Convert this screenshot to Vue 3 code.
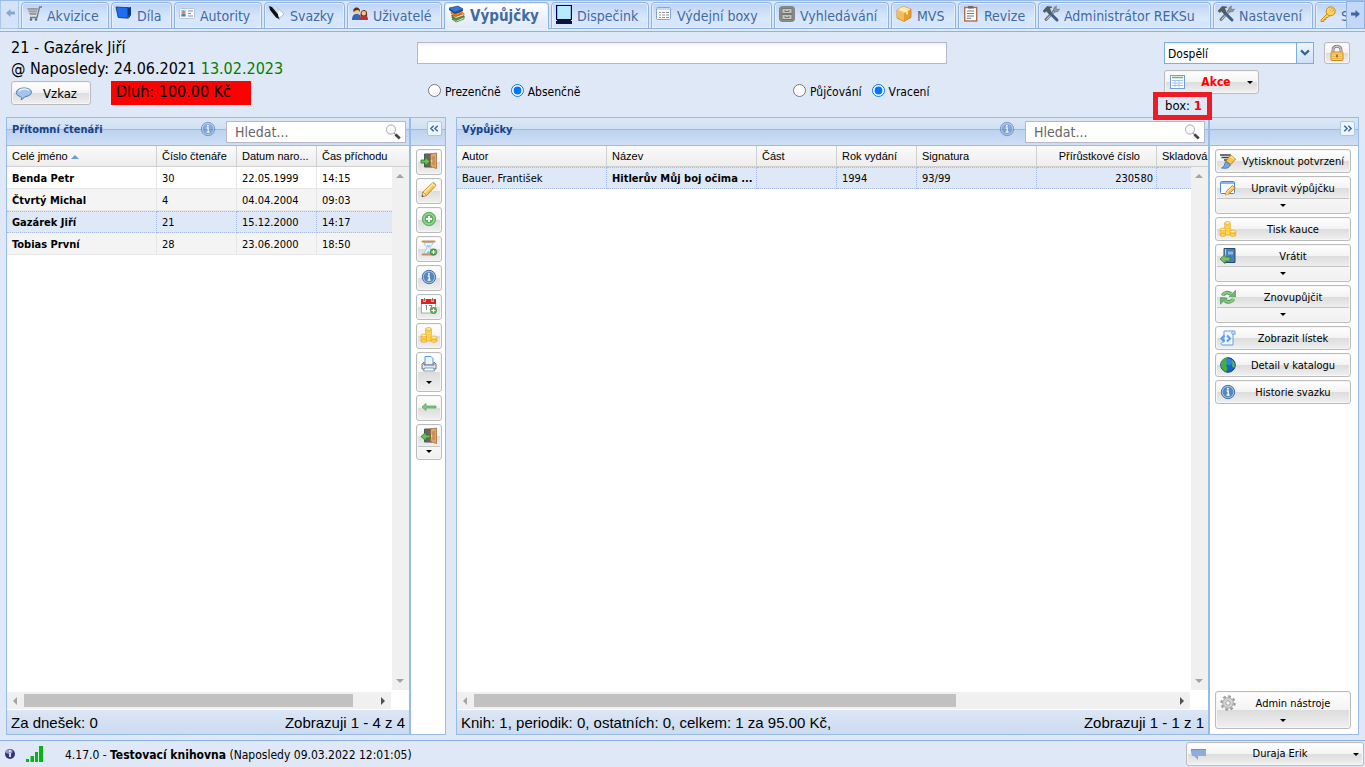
<script setup>
import { ref } from 'vue'

const icons = {
  cart: '<path d="M1 2h11l-2 7H4z" fill="#9a9a9a"/><path d="M2 4.2h9M3 6.4h8" stroke="#d9e5f8" stroke-width=".5"/><path d="M4 11.5h7L13.6 1H16" fill="none" stroke="#777" stroke-width="1.3"/><circle cx="5" cy="13.5" r="1.3" fill="#666"/><circle cx="10" cy="13.5" r="1.3" fill="#666"/>',
  blueBook: '<path d="M11 1.500l4-.5v8l-2.500 4z" fill="#0b3b8c"/><path d="M0 1l12 .7-.3 10.500-9.500-.7z" fill="#1f6ef2" stroke="#0a2d80" stroke-width=".8"/>',
  card: '<rect x=".5" y="2.500" width="15" height="10" rx="1" fill="#f7f9fc" stroke="#b8c6da"/><rect x="2" y="4" width="5" height="6" fill="#a9d3f5"/><circle cx="4.500" cy="6" r="1.500" fill="#c98a4b"/><path d="M2.300 10.500c0-4 4.400-4 4.400 0z" fill="#4f7fc0"/><path d="M9 5h5M9 7.500h3M9 10h5" stroke="#7f91a8"/>',
  pen: '<path d="M0 0l3 1 7 8.500 1 4-4-2L1 4z" fill="#111"/><path d="M8 1.500l7 6.500-5 5" fill="none" stroke="#b8bcc4" stroke-width="1"/><path d="M10 4l4 4-4 4-1-3z" fill="#fff"/>',
  users: '<path d="M0 14c0-5 2-6 5-6s4 2 4 6z" fill="#3567b5"/><circle cx="4.800" cy="5.300" r="2.800" fill="#f3c394"/><path d="M1.500 6C0 0 9 0 8 6 7 3 4 3.500 1.500 6z" fill="#5a3217"/><path d="M8 14c0-4 1-5 4-5s4 2 4 5z" fill="#b33633"/><path d="M8.500 10c-1-8 8-8 6.500 0z" fill="#6b3917"/><circle cx="11.800" cy="7.200" r="2.200" fill="#f3c394"/>',
  books: '<path d="M3 9l9-1.500 3.500 3L7 14 3 12z" fill="#37a02c" stroke="#17601a" stroke-width=".5"/><path d="M7 14.500l8-3.500v2l-8 3-4-3z" fill="#eee" stroke="#237226" stroke-width=".7"/><path d="M1.500 5.500L11 4l4 3-8 3-5-2z" fill="#ea7a20"/><path d="M7 10.500l8-3v2l-8 2.800-4.500-3z" fill="#f7eee5" stroke="#b4520d" stroke-width=".7"/><path d="M0 2l9-2 5 3-8 3.500z" fill="#2d77d8" stroke="#123d7c" stroke-width=".6"/><path d="M0 2v2l6 4 8-3V3L6 6.500z" fill="#174892"/>',
  monitor: '<path d="M0-1h16v15H0z" fill="#000066"/><path d="M1.200 0h13.600v13H1.200z" fill="#b5ebff"/><path d="M1 14h14v1H1zM0 15h16v3H0z" fill="#11133c"/>',
  sheet: '<rect x=".5" y="1.500" width="14" height="12" rx="1" fill="#fff" stroke="#7fa7da"/><path d="M1 2h13v2H1z" fill="#c3dbf6"/><path d="M3 6.500h2M6 6.500h3M10 6.500h3M3 9h2M6 9h3M10 9h3M3 11.500h2M6 11.500h3M10 11.500h3" stroke="#8f8f8f" stroke-width="1"/>',
  greenSheet: '<rect x=".5" y="1.500" width="14" height="13" fill="#fff" stroke="#6e9edb"/><path d="M2 3.500h11" stroke="#67b567" stroke-width="1.500"/><path d="M2 6.500h11M2 9h11M2 11.500h11M5 6v7M9 6v7" stroke="#a4c3ea" stroke-width="1"/>',
  cabinet: '<rect x=".7" y=".7" width="14.600" height="14.600" rx="2" fill="#8f918c" stroke="#73756f"/><rect x="3" y="2.500" width="10" height="5" fill="#c4c5be" stroke="#777"/><rect x="3" y="8.500" width="10" height="5" fill="#c4c5be" stroke="#777"/><path d="M6 4v1.500h4V4M6 10v1.500h4V10" fill="none" stroke="#777"/>',
  box: '<path d="M1 4l6-3.500L15 3v8.500L8 15.500 1 12z" fill="#e99d2f" stroke="#c0781d" stroke-width=".7"/><path d="M1 4l7 3 7-4-8-2.500z" fill="#ffe5a0"/><path d="M1 4l7 3v8l-7-3.500z" fill="#f6bd56"/><path d="M4 2.500l7 3v3" fill="none" stroke="#fff2c8" stroke-width="1.500"/>',
  list: '<rect x="1.700" y="1.500" width="12" height="13.500" fill="#fff" stroke="#b06e51" stroke-width="1.400"/><path d="M5 0h5.500v2.500H5z" fill="#7a675b"/><path d="M4 5h7M4 7.500h7M4 10h7M4 12.300h4" stroke="#777" stroke-width="1"/>',
  tools: '<path d="M12.500 3.500L3 13.500" stroke="#70777c" stroke-width="3" stroke-linecap="round"/><path d="M12 4.500L3.500 13.500" stroke="#cfd5d9" stroke-width="1"/><path d="M10.500 4.500L11 1.500 13.500 0 13 2.500 14 3.500 16.500 3 15 5.500l-3 .5z" fill="#939a9f" stroke="#687076" stroke-width=".6"/><path d="M7 7l7 7" stroke="#3f5f86" stroke-width="3" stroke-linecap="round"/><path d="M0 5l4-4.500 5 .5-2.500 1.500L8 5 5.500 7.500 3.500 5 1.800 6.500z" fill="#555c60" stroke="#3c4245" stroke-width=".5"/>',
  key: '<path d="M7.500 7.500L1 14v1.500h3v-2h2v-2h2L10 9.500" fill="#ffd35a" stroke="#c98a1d" stroke-width="1"/><circle cx="10.700" cy="5.300" r="4.500" fill="#ffd35a" stroke="#c98a1d"/><circle cx="12" cy="4" r="1.300" fill="#fff" stroke="#c98a1d" stroke-width=".7"/>',
  bubble: '<path d="M3 11c-5-2-3-8 5-8 9 0 10 7 2 8.500-2 0-2 2.500-5 3 1-1.500.5-2.500-2-3.500z" fill="#a3c4ec" stroke="#3f6ca8" stroke-width=".9"/><path d="M3 6c2-2.500 8-2.500 10-.5" fill="none" stroke="#e9f3ff" stroke-width="1.500"/>',
  lock: '<path d="M4 8V5c0-5 8-5 8 0v3" fill="none" stroke="#888" stroke-width="3"/><path d="M4 8V5c0-5 8-5 8 0v3" fill="none" stroke="#ddd" stroke-width="1"/><rect x="2" y="7" width="12" height="8.500" rx="1" fill="#ffd46b" stroke="#c68c27"/><path d="M3 9h10M3 11.300h10M3 13.500h10" stroke="#e5a93b" stroke-width=".8"/><path d="M7.300 9.500h1.400v3H7.300z" fill="#805511"/>',
  doorIn: '<path d="M3.500 1H11v13H3.500z" fill="#666" stroke="#555"/><path d="M9.500 1L15.500 0v15.500l-6-2z" fill="#e0a76c" stroke="#98612b" stroke-width=".7"/><path d="M11 3.500l3-.5v9.500l-3-1z" fill="#cd9054"/><circle cx="10.700" cy="8" r=".8" fill="#fff1ad"/><path d="M0 7h4V4l5 4.500L4 13v-3H0z" fill="#6abc5e" stroke="#2b762a" stroke-width=".8"/>',
  doorOut: '<path d="M3.500 1H11v13H3.500z" fill="#666" stroke="#555"/><path d="M9.500 1L15.500 0v15.500l-6-2z" fill="#e0a76c" stroke="#98612b" stroke-width=".7"/><path d="M11 3.500l3-.5v9.500l-3-1z" fill="#cd9054"/><circle cx="10.700" cy="8" r=".8" fill="#fff1ad"/><path d="M9 7H5V4L0 8.500 5 13v-3h4z" fill="#6abc5e" stroke="#2b762a" stroke-width=".8"/>',
  pencil: '<path d="M1 14.500l1-4.500L11.500 1c1-1 4 1.500 3 3L5.500 13.500z" fill="#fbc95a" stroke="#bb781d" stroke-width=".9"/><path d="M3 10.500l9-8.500" stroke="#fff0ad" stroke-width="1.300"/><path d="M2 10l3.500 3.500-4.500 1.200z" fill="#f9dfb9" stroke="#a77132" stroke-width=".5"/><path d="M1 14.700l.4-1.700 1.300 1.300z" fill="#222"/><path d="M11 1.500l3.500 3.300" stroke="#fff2d3" stroke-width="1"/>',
  plus: '<circle cx="8" cy="8" r="6.700" fill="#7cc676" stroke="#4f9f50" stroke-width=".8"/><circle cx="8" cy="8" r="5" fill="#5cb35a" stroke="#c5e8c0" stroke-width=".7"/><path d="M8 5v6M5 8h6" stroke="#fff" stroke-width="2"/>',
  hourglass: '<path d="M3 2.500c0 3 3 4 3 5.500s-3 3-3 6h9c0-3-3-4.500-3-6s3-3 3-5.500z" fill="#e4f1ff" stroke="#9dbde0" stroke-width=".8"/><path d="M5.500 5.500h4L7.500 7.500zM5 13.500l2.500-2.500 2.500 2.500z" fill="#79b6ea"/><path d="M1.500 1.500h12M1.500 14.500h11" stroke="#c49160" stroke-width="2" stroke-linecap="round"/><circle cx="12.500" cy="12" r="3.300" fill="#4fa44e" stroke="#246e27" stroke-width=".5"/><path d="M12.500 10v4M10.500 12h4" stroke="#fff" stroke-width="1.200"/>',
  info: '<circle cx="8" cy="8" r="6.700" fill="#a3c0e2" stroke="#4271ae"/><circle cx="8" cy="8" r="5.200" fill="#5586c0"/><path d="M6.700 7h1.500v4M6.500 11.200h3.200" fill="none" stroke="#fff" stroke-width="1.300"/><circle cx="7.900" cy="4.800" r="1" fill="#fff"/>',
  calendar: '<rect x=".5" y="2" width="14" height="13" fill="#fff" stroke="#aaa"/><path d="M0 1h15v5H0z" fill="#e1201b"/><path d="M3.500 0v4M11.500 0v4" stroke="#fff" stroke-width="2"/><path d="M3.500 0v3.500M11.500 0v3.500" stroke="#777" stroke-width="1"/><path d="M4.500 8l1-1v5M8 7.500h3l-2 4.500" stroke="#888" fill="none"/><circle cx="12.500" cy="12.500" r="3.400" fill="#4fa44e"/><path d="M12.500 10.500v4M10.500 12.500h4" stroke="#fff" stroke-width="1.200"/>',
  coins: '<g fill="#ffd952" stroke="#e0a62c" stroke-width=".7"><path d="M4.700 2v12h5.600V2z"/><ellipse cx="7.500" cy="2" rx="2.800" ry="1.500" fill="#ffec9a"/><path d="M0 9v5h5.500V9z"/><ellipse cx="2.800" cy="14" rx="2.800" ry="1.400"/><ellipse cx="2.800" cy="8.500" rx="2.800" ry="1.400" fill="#ffec9a"/><path d="M10 10.500V14h5.800v-3.500z"/><ellipse cx="12.900" cy="14" rx="2.900" ry="1.400"/><ellipse cx="12.900" cy="10.500" rx="2.900" ry="1.500" fill="#ffec9a"/></g><path d="M5.500 5h4M5.500 7.500h4M5.500 10h4M1 11.500h3.500" stroke="#f0bd38" stroke-width=".7"/>',
  printer: '<path d="M4 .5h6l2 2V9H4z" fill="#eaf4ff" stroke="#5d96d1"/><path d="M3 6L1 8v5h14V8l-2-2v3H3z" fill="#e4e6e8" stroke="#656c76" stroke-width=".9"/><path d="M3.500 12h9l1 3h-11z" fill="#fff" stroke="#6c91bd" stroke-width=".9"/>',
  arrowLeft: '<path d="M1 8l4-3.500V7h10v2H5v2.500z" fill="#84c47f" stroke="#5ca95e" stroke-width=".8"/>',
  print: '<path d="M0 2h11M1.500 4.500h9M4 7h6" stroke="#444" stroke-width="1.400"/><path d="M10.500 2l5 4-4.500 5.500L6 8z" fill="#f8c54c" stroke="#ad7b25" stroke-width=".8"/><path d="M11 3.500l3 2.500" stroke="#ffe7a5" stroke-width="1.500"/><path d="M5.500 8.500l5 3.500-2 2.500c-2 1-4 1-7 .5 3-1 3-4 4-6.500z" fill="#72a9e5" stroke="#3d70ae" stroke-width=".8"/>',
  edit: '<rect x=".5" y="1.500" width="14" height="12" rx="1" fill="#f8fbff" stroke="#4c87ce"/><path d="M1 2h13v2H1z" fill="#88b5ee"/><path d="M5.500 15l1-4 6-5.500L15.500 8l-7 6z" fill="#fac45a" stroke="#b4751f" stroke-width=".8"/><path d="M7.500 11.500L13 6.500" stroke="#ffe9ad"/><path d="M5.500 15l1-3 2 2z" fill="#f6dfbd"/>',
  returnBook: '<path d="M4 .5h11v14H4z" fill="#4a7fb4" stroke="#234d75"/><path d="M5.500 1v13" stroke="#b5cee7" stroke-width="1.200"/><path d="M8 3.500h5v3H8z" fill="#8fb6dc"/><path d="M10 9H5V6.500L0 11l5 4.500V13h5z" fill="#79bd70" stroke="#347d36" stroke-width=".8"/>',
  renew: '<path d="M2.500 6.500C4 3.500 8 2.500 11 5" fill="none" stroke="#4d9a54" stroke-width="3.600"/><path d="M9 7.500l6.500.5V1.500z" fill="#72b571" stroke="#4d9a54" stroke-width=".7"/><path d="M13.500 10C12 13 8 14 5 11.500" fill="none" stroke="#4d9a54" stroke-width="3.600"/><path d="M7 9L.5 8.500V15z" fill="#72b571" stroke="#4d9a54" stroke-width=".7"/><path d="M2.500 6.500C4 3.500 8 2.500 11 5M13.500 10C12 13 8 14 5 11.500" fill="none" stroke="#8fc98a" stroke-width="1.800"/>',
  script: '<path d="M4 1h11v3h-2v11H2c-2-2 0-3 2-3z" fill="#eef6ff" stroke="#6d9ed5"/><path d="M13 1c-2 1-2 2-1 3h3.500" fill="#bdd8f4" stroke="#6d9ed5" stroke-width=".7"/><path d="M4.500 5.500L1.500 8.500l3 3M7 5.500l3 3-3 3" fill="none" stroke="#5c9ce8" stroke-width="2.200"/>',
  globe: '<circle cx="8" cy="8" r="7.300" fill="#1764bd" stroke="#174282"/><path d="M1 6c0-2 2-4 4-5h3L7 4l1.500 2L6 9l1.500 2L6 15c-3-1-5-4-5-7z" fill="#46b03a"/><path d="M6 2c4-1 7 1 7 4l-4 3-3-4z" fill="#2d86dc"/><path d="M12 3c3 2 3.500 6 2 8l-2-2 .5-3z" fill="#57bd48"/>',
  gear: '<circle cx="8" cy="8" r="6.600" fill="none" stroke="#999" stroke-width="2.200" stroke-dasharray="2.600 2.580"/><circle cx="8" cy="8" r="5.300" fill="#d2d2d2" stroke="#aaa"/><circle cx="8" cy="8" r="2.200" fill="#f4f4f4" stroke="#999" stroke-width=".8"/>',
  flag: '<path d="M0 3h15v7H8l-1 .5L7 14l-4-4H1z" fill="#91acd8"/><path d="M0 3h15v1H1v5z" fill="#6c8fc8"/>',
  search: '<circle cx="6" cy="5.500" r="4.600" fill="#f7faff" stroke="#aaaeb4"/><path d="M9 9l2 2" stroke="#999" stroke-width="1.500"/><path d="M10.500 10.500l4.300 4" stroke="#444" stroke-width="2.800"/>',
  left: '<path d="M8.500 4v2.500H13v3H8.500V12L4 8z" fill="#8ba6cf"/>',
  right: '<path d="M7.500 4v2.500H3v3h4.500V12L12 8z" fill="#3f65a8"/>',
  collapse: '<path d="M7 4.500L3.500 8 7 11.500M12 4.500L8.500 8l3.500 3.500" fill="none" stroke="#366a9f" stroke-width="1.800"/>',
  expand: '<path d="M4 4.500L7.500 8 4 11.500M9 4.500L12.500 8 9 11.500" fill="none" stroke="#366a9f" stroke-width="1.800"/>',
  orb: '<circle cx="8" cy="8" r="5" fill="#363478"/><ellipse cx="7" cy="5.500" rx="3.500" ry="2.200" fill="#9699cd"/><path d="M8 7v4M8 4.300v1.400" fill="none" stroke="#fff" stroke-width="1.600"/>',
  signal: '<path d="M0 13h3v3H0zM4.500 10h3.500v6H4.500zM9 6h3v10H9zM13 0h4v16h-4z" fill="#08b414"/>'
}

const tabs = [
  ['cart', 'Akvizice'], ['blueBook', 'Díla'], ['card', 'Autority'], ['pen', 'Svazky'], ['users', 'Uživatelé'],
  ['books', 'Výpůjčky'], ['monitor', 'Dispečink'], ['sheet', 'Výdejní boxy'], ['cabinet', 'Vyhledávání'],
  ['box', 'MVS'], ['list', 'Revize'], ['tools', 'Administrátor REKSu'], ['tools', 'Nastavení'], ['key', 'S']
]
const activeTab = ref('Výpůjčky')
const presence = ref('out')
const mode = ref('return')
const selectedReader = ref('21')
const command = ref('')

const readers = [
  { name: 'Benda Petr', id: '30', born: '22.05.1999', time: '14:15' },
  { name: 'Čtvrtý Michal', id: '4', born: '04.04.2004', time: '09:03' },
  { name: 'Gazárek Jiří', id: '21', born: '15.12.2000', time: '14:17' },
  { name: 'Tobias První', id: '28', born: '23.06.2000', time: '18:50' }
]
const readerTools = [
  ['doorIn', 'Příchod čtenáře'], ['pencil', 'Upravit'], ['plus', 'Přidat'], ['hourglass', 'Prodloužit'], ['info', 'Informace'],
  ['calendar', 'Registrace'], ['coins', 'Platby'], ['printer', 'Tisk', 'menu'], ['arrowLeft', 'Zpět'], ['doorOut', 'Odchod čtenáře', 'split']
]
const loanTools = [
  ['print', 'Vytisknout potvrzení'], ['edit', 'Upravit výpůjčku', 'split'], ['coins', 'Tisk kauce'], ['returnBook', 'Vrátit', 'split'],
  ['renew', 'Znovupůjčit', 'split'], ['script', 'Zobrazit lístek'], ['globe', 'Detail v katalogu'], ['info', 'Historie svazku']
]
</script>

<template>
  <div class="app">
    <nav class="tabbar">
      <button class="scroller" aria-label="Posunout vlevo"><svg class="icon" viewBox="0 0 16 16" v-html="icons.left"></svg></button>
      <div class="tabs" role="tablist">
        <button v-for="[icon, label] in tabs" :key="label" class="tab" :class="{ active: label === activeTab }" role="tab" :aria-selected="label === activeTab" @click="activeTab = label">
          <svg class="icon" viewBox="0 0 16 16" v-html="icons[icon]"></svg><span>{{ label }}</span>
        </button>
      </div>
      <button class="scroller end" aria-label="Posunout vpravo"><svg class="icon" viewBox="0 0 16 16" v-html="icons.right"></svg></button>
    </nav>

    <header class="top">
      <section class="reader">
        <div>21 - Gazárek Jiří</div>
        <div>@ Naposledy: 24.06.2021 <span class="valid">13.02.2023</span></div>
        <div class="reader-actions">
          <button class="btn message"><svg class="icon" viewBox="0 0 16 16" v-html="icons.bubble"></svg><span>Vzkaz</span></button>
          <div class="debt">Dluh: 100.00 Kč</div>
        </div>
      </section>
      <section class="command">
        <input v-model="command" class="command-input" type="text" aria-label="Čárový kód">
        <div class="radios">
          <div class="radio-group">
            <label><input v-model="presence" type="radio" name="presence" value="in">Prezenčně</label>
            <label><input v-model="presence" type="radio" name="presence" value="out">Absenčně</label>
          </div>
          <div class="radio-group">
            <label><input v-model="mode" type="radio" name="mode" value="lend">Půjčování</label>
            <label><input v-model="mode" type="radio" name="mode" value="return">Vracení</label>
          </div>
        </div>
      </section>
      <section class="department">
        <div class="department-row">
          <div class="combo">
            <select aria-label="Oddělení"><option>Dospělí</option></select>
            <span class="trigger"><svg viewBox="0 0 16 16"><path d="M3.500 5L8 9.500 12.500 5" fill="none" stroke="#34629c" stroke-width="2.500" /></svg></span>
          </div>
          <button class="btn lock" aria-label="Zamknout"><svg class="icon" viewBox="0 0 16 16" v-html="icons.lock"></svg></button>
        </div>
        <button class="btn action"><svg class="icon" viewBox="0 0 16 16" v-html="icons.greenSheet"></svg><span>Akce</span><i class="caret"></i></button>
        <div class="box-mark">box: <b>1</b></div>
      </section>
    </header>

    <main class="work">
      <section class="panel readers">
        <div class="grid">
          <div class="panel-head">
            <h2>Přítomní čtenáři</h2>
            <svg class="icon hint" viewBox="0 0 16 16" v-html="icons.info"></svg>
            <label class="search"><input type="text" placeholder="Hledat..." aria-label="Hledat čtenáře"><svg class="icon" viewBox="0 0 16 16" v-html="icons.search"></svg></label>
          </div>
          <div class="grid-view">
            <div class="table-wrap">
              <table>
                <colgroup><col class="c150"><col class="c80"><col class="c80"><col></colgroup>
                <thead><tr><th>Celé jméno <i class="sort"></i></th><th>Číslo čtenáře</th><th>Datum naro...</th><th>Čas příchodu</th></tr></thead>
                <tbody>
                  <tr v-for="r in readers" :key="r.id" :class="{ selected: r.id === selectedReader }" @click="selectedReader = r.id">
                    <td><b>{{ r.name }}</b></td><td>{{ r.id }}</td><td>{{ r.born }}</td><td>{{ r.time }}</td>
                  </tr>
                </tbody>
              </table>
            </div>
            <div class="vscroll"><i class="up"></i><i class="down"></i></div>
          </div>
          <div class="hscroll"><i class="prev"></i><div class="track"><div class="thumb thumb-wide"></div></div><i class="next"></i></div>
          <footer class="grid-foot"><span>Za dnešek: 0</span><span>Zobrazuji 1 - 4 z 4</span></footer>
        </div>
        <aside class="tools narrow">
          <div class="panel-head"><button class="collapse" aria-label="Sbalit"><svg class="icon" viewBox="0 0 16 16" v-html="icons.collapse"></svg></button></div>
          <div class="tool-list">
            <button v-for="[icon, label, kind] in readerTools" :key="label" class="btn tool" :class="kind" :aria-label="label">
              <svg class="icon" viewBox="0 0 16 16" v-html="icons[icon]"></svg><i v-if="kind" class="caret"></i>
            </button>
          </div>
        </aside>
      </section>

      <section class="panel loans">
        <div class="grid">
          <div class="panel-head">
            <h2>Výpůjčky</h2>
            <svg class="icon hint" viewBox="0 0 16 16" v-html="icons.info"></svg>
            <label class="search"><input type="text" placeholder="Hledat..." aria-label="Hledat výpůjčku"><svg class="icon" viewBox="0 0 16 16" v-html="icons.search"></svg></label>
          </div>
          <div class="grid-view">
            <div class="table-wrap">
              <table>
                <colgroup><col class="c150"><col class="c150"><col class="c80"><col class="c80"><col class="c120"><col class="c120"><col></colgroup>
                <thead><tr><th>Autor</th><th>Název</th><th>Část</th><th>Rok vydání</th><th>Signatura</th><th class="num">Přírůstkové číslo</th><th>Skladová</th></tr></thead>
                <tbody><tr class="selected"><td>Bauer, František</td><td><b>Hitlerův Můj boj očima ...</b></td><td></td><td>1994</td><td>93/99</td><td class="num">230580</td><td></td></tr></tbody>
              </table>
            </div>
            <div class="vscroll"><i class="up"></i><i class="down"></i></div>
          </div>
          <div class="hscroll"><i class="prev"></i><div class="track"><div class="thumb"></div></div><i class="next"></i></div>
          <footer class="grid-foot"><span>Knih: 1, periodik: 0, ostatních: 0, celkem: 1 za 95.00 Kč,</span><span>Zobrazuji 1 - 1 z 1</span></footer>
        </div>
        <aside class="tools wide">
          <div class="panel-head"><button class="collapse" aria-label="Sbalit"><svg class="icon" viewBox="0 0 16 16" v-html="icons.expand"></svg></button></div>
          <div class="tool-list">
            <button v-for="[icon, label, kind] in loanTools" :key="label" class="btn labelled" :class="kind">
              <svg class="icon" viewBox="0 0 16 16" v-html="icons[icon]"></svg><span>{{ label }}</span><i v-if="kind" class="caret"></i>
            </button>
            <button class="btn labelled menu admin"><svg class="icon" viewBox="0 0 16 16" v-html="icons.gear"></svg><span>Admin nástroje</span><i class="caret"></i></button>
          </div>
        </aside>
      </section>
    </main>

    <footer class="status">
      <svg class="icon" viewBox="0 0 16 16" v-html="icons.orb"></svg>
      <svg class="signal" viewBox="0 0 17 16" v-html="icons.signal"></svg>
      <span class="version">4.17.0 - <b>Testovací knihovna</b> (Naposledy 09.03.2022 12:01:05)</span>
      <button class="btn user"><svg class="icon" viewBox="0 0 16 16" v-html="icons.flag"></svg><span>Duraja Erik</span><i class="caret"></i></button>
    </footer>
  </div>
</template>

<style>
html, body { overflow: hidden; }
</style>

<style scoped>
* { box-sizing: border-box; }
.app {
  height: 100vh; display: flex; flex-direction: column; background: #dfe8f6; color: #000;
  font: 11px/16px Tahoma, "DejaVu Sans Condensed", "Noto Sans", sans-serif;
}
button, input, select { font: inherit; color: inherit; }
button { cursor: pointer; }
.icon { width: 16px; height: 16px; flex: none; overflow: visible; }
.app :deep(svg) { display: block; }

.tabbar { flex: none; height: 32px; display: flex; border-top: 1px solid #99bbe8; border-bottom: 1px solid #8db2e3; background: linear-gradient(#dae7f8 27px, #8db2e3 27px, #8db2e3 28px, #deecfd 28px); }
.tabs { flex: 1; min-width: 0; overflow: hidden; display: grid; gap: 2px; padding: 1px 0 0 2px; grid-template-columns: 88px 61px 88px 81px 95px 105px 98px 121px 115px 65px 78px 173px 100px 100px; }
.tab { height: 27px; display: flex; align-items: flex-start; gap: 5px; padding: 3px 0 0 5px; border: 1px solid #8db2e3; border-radius: 4px 4px 0 0; background: linear-gradient(#bdd3f3, #d8e7fc 60%, #d5e5fc); box-shadow: inset 0 0 0 1px #e6f0fd; color: #416aa3; font-size: 14px; line-height: 20px; white-space: nowrap; }
.tab .icon { margin-left: -1px; }
.tab.active { border-bottom: 0; background: linear-gradient(#fff, #dfe8f6); color: #416aa3; font-size: 15px; font-weight: bold; }
.scroller { width: 19px; height: 28px; flex: none; padding: 4px 1px; border: 1px solid #a9c6ed; border-width: 0 1px 1px; background: #d4e3f8; display: flex; }
.scroller.end { border: 1px solid #8db2e3; background: #c3d8f6; }

.top { flex: none; height: 85px; display: grid; grid-template-columns: 406px 1fr 190px; padding: 5px 11px 0; position: relative; }
.reader { font-size: 16px; line-height: 21px; white-space: nowrap; }
.valid { color: #008000; }
.reader-actions { display: flex; gap: 20px; padding-top: 2px; }
.debt { width: 140px; height: 24px; padding-left: 5px; background: #f00; }
.btn { position: relative; border: 1px solid #bbb; border-radius: 3px; background: linear-gradient(#fff, #f3f3f3 50%, #dcdcdc 50%, #f0f0f0); box-shadow: inset 0 0 0 1px #f6f6f6; padding: 0; }
.message { width: 80px; height: 24px; display: flex; align-items: center; padding-left: 4px; gap: 11px; font-size: 13px; }
.command { padding-top: 5px; }
.command-input { display: block; width: 71%; height: 22px; border: 1px solid #b5b8c8; background: linear-gradient(#eef0f0, #fff 4px); outline: none; }
.radios { display: grid; grid-template-columns: 1fr 1fr; padding: 20px 6px 0 11px; font-size: 12px; }
.radio-group { display: flex; gap: 10px; }
.radio-group label { display: flex; gap: 4px; line-height: 17px; }
.radio-group input { margin: 0; width: 13px; height: 13px; }
.department { padding: 5px 0 0; font-size: 12px; }
.department-row { display: flex; gap: 10px; }
.combo { position: relative; width: 150px; height: 22px; }
.combo select { appearance: none; width: 100%; height: 22px; border: 1px solid #7eadd9; border-radius: 0; background: linear-gradient(#eef0f0, #fff 4px); padding: 2px 20px 0 3px; outline: none; }
.trigger { position: absolute; right: 0; top: 0; width: 18px; height: 22px; padding: 3px 1px; border: 1px solid #7eadd9; background: linear-gradient(#f0f6fe, #cfe0f6); pointer-events: none; }
.trigger svg { width: 14px; height: 14px; }
.lock { width: 26px; height: 22px; padding: 2px 4px; }
.action { display: flex; align-items: center; width: 95px; height: 24px; margin-top: 6px; padding-left: 5px; color: #f00; font-weight: bold; }
.action span { flex: 1; padding-left: 4px; text-align: center; }
.action .caret { margin: 0 5px; }
.box-mark { position: absolute; z-index: 2; right: 153px; top: 60px; width: 59px; height: 28px; padding: 1px 0 0 7px; border: 5px solid #ed1c24; font-size: 13px; }
.box-mark b { color: #f00; }
.caret { width: 0; height: 0; border: 3px solid transparent; border-top-color: #000; border-bottom: 0; }

.work { flex: 1; min-height: 0; display: flex; gap: 10px; padding: 0 6px 5px; }
.panel { display: flex; border: 1px solid #99bbe8; background: #fff; min-width: 0; }
.readers { width: 440px; flex: none; }
.loans { flex: 1; }
.grid { flex: 1; min-width: 0; display: flex; flex-direction: column; overflow: hidden; }
.panel-head { flex: none; height: 28px; display: flex; align-items: flex-start; border-bottom: 1px solid #99bbe8; background: linear-gradient(#dce8f6, #cfdff3 11px, #99bbe8 11px, #99bbe8 12px, #bcd2ef 12px, #cfdff5); }
.panel-head h2 { flex: 1; margin: 3px 0 0 5px; font-size: 11px; line-height: 18px; color: #15428b; }
.hint { margin: 3px 10px 0 0; opacity: .6; }
.search { position: relative; width: 180px; height: 22px; margin: 3px 3px 0 0; }
.search input { display: block; width: 100%; height: 22px; padding: 0 24px 0 8px; border: 1px solid #b5b8c8; background: #fff; font-size: 14px; outline: none; }
.search input::placeholder { color: #666; opacity: 1; }
.search .icon { position: absolute; right: 5px; top: 3px; }
.grid-view { flex: 1; min-height: 0; display: flex; background: linear-gradient(#fafafa, #ededed 20px, #d0d0d0 20px, #d0d0d0 21px, #fff 21px) no-repeat; }
.table-wrap { flex: 1; min-width: 0; }
table { width: 100%; table-layout: fixed; border-collapse: separate; border-spacing: 0; white-space: nowrap; }
.c150 { width: 150px; }
.c120 { width: 120px; }
.c80 { width: 80px; }
th { height: 21px; padding: 0 0 1px 5px; border-right: 1px solid #d0d0d0; text-align: left; font: 11px/20px "Liberation Sans", Arial, sans-serif; }
th:last-child { border-right: 0; }
td { height: 22px; padding: 2px 3px 0 5px; border: 0 solid #e6e6e6; border-width: 0 1px 1px 0; line-height: 19px; }
td:last-child { border-right: 0; }
.num { text-align: right; }
th.num { padding-right: 16px; }
tbody tr:nth-child(even) td { background: #f4f4f4; }
tbody tr.selected td { padding-top: 1px; background: #dfe8f6; border-color: #a3bae9; border-style: dotted; border-top-width: 1px; }
.sort { display: inline-block; border: 4px solid transparent; border-bottom-color: #6f9bd8; border-top: 0; vertical-align: 1px; }
.vscroll { flex: none; width: 17px; margin-top: 21px; margin-bottom: 2px; padding: 7px 4px; background: #f0f0f0; display: flex; flex-direction: column; justify-content: space-between; }
.up, .down, .prev, .next { width: 0; height: 0; border: 4px solid transparent; }
.up { border-bottom-color: #a3a3a3; border-top: 0; }
.down { border-top-color: #a3a3a3; border-bottom: 0; }
.hscroll { flex: none; height: 17px; margin: 0 18px 1px 0; padding: 0 6px; display: flex; align-items: center; justify-content: space-between; background: #f0f0f0; }
.prev { border-right-color: #a3a3a3; border-left: 0; }
.next { border-left-color: #505050; border-right: 0; }
.track { flex: 1; margin: 0 7px; height: 13px; }
.thumb { width: 69%; height: 13px; background: #c1c1c1; }
.thumb-wide { width: 94%; }
.grid-foot { flex: none; height: 24px; display: flex; justify-content: space-between; padding: 0 4px; background: linear-gradient(#dbe7f5, #cbdbef); font: 15px/25px "Liberation Sans", Arial, sans-serif; white-space: nowrap; }
.tools { flex: none; display: flex; flex-direction: column; border-left: 2px solid #99bbe8; }
.narrow { width: 36px; }
.wide { width: 150px; }
.tools .panel-head { justify-content: flex-end; }
.collapse { width: 15px; height: 15px; margin: 3px 3px 0 0; padding: 0; border: 1px solid #a9c7ee; border-radius: 2px; background: #eef5ff; display: flex; align-items: center; justify-content: center; }
.collapse .icon { width: 13px; height: 13px; }
.tool-list { flex: 1; display: flex; flex-direction: column; gap: 3px; padding: 3px 3px 5px 5px; }
.wide .tool-list { padding-right: 7px; }
.tool { height: 26px; display: flex; flex-direction: column; align-items: center; padding-top: 3px; }
.tool.menu { height: 40px; }
.tool.split { height: 36px; }
.tool.menu .caret { margin-top: 9px; }
.tool.split .caret { margin-top: 6px; }
.labelled { height: 24px; display: grid; grid-template-columns: 20px 1fr; align-content: start; padding: 3px 4px 0; line-height: 18px; }
.labelled span { height: 16px; text-align: center; white-space: nowrap; }
.labelled.split, .labelled.menu { height: 38px; }
.split { background: linear-gradient(#fff, #f3f3f3 11px, #dcdcdc 11px, #eee 21px, #c4c4c4 21px, #c4c4c4 22px, #f6f6f6 22px, #f0f0f0); }
.labelled .caret { grid-column: 1 / 3; justify-self: center; margin-top: 8px; }
.admin { margin-top: auto; }

.status { flex: none; height: 27px; display: flex; align-items: center; border-top: 1px solid #8db2e3; padding: 0 1px 0 2px; font-size: 12px; white-space: nowrap; }
.signal { width: 17px; height: 16px; margin-left: 8px; }
.version { flex: 1; margin-left: 22px; padding-top: 1px; }
.user { width: 178px; height: 24px; display: flex; align-items: center; padding: 0 4px; font-size: 11px; }
.user span { flex: 1; text-align: center; }
</style>
